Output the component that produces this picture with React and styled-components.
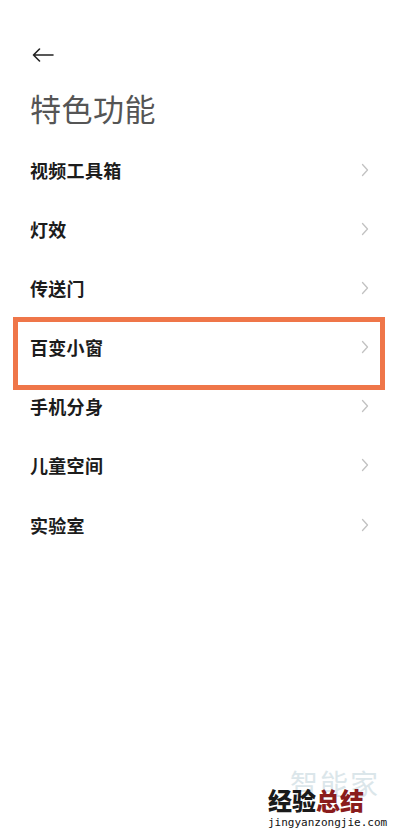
import React from "react";
import styled, { createGlobalStyle } from "styled-components";

const Global = createGlobalStyle`
  html, body { margin: 0; padding: 0; background: #fff; }
  body { font-family: "Noto Sans CJK SC", "Noto Sans", sans-serif; }
`;

const Page = styled.div`
  position: relative;
  width: 400px;
  height: 838px;
  overflow: hidden;
  background: #fff;
`;

const Header = styled.div`
  display: flex;
  flex-direction: column;
  padding: 44px 0 0 30px;
`;

const BackButton = styled.div`
  width: 28px;
  height: 22px;
  display: flex;
  align-items: center;
  color: #222;
  margin-left: 2px;
`;

const Title = styled.h1`
  margin: 22px 0 0 0;
  font-size: 31px;
  line-height: 40px;
  font-weight: 400;
  color: #555;
  letter-spacing: 0.5px;
`;

const List = styled.div`
  display: flex;
  flex-direction: column;
  margin-top: 12px;
`;

const Row = styled.div`
  position: relative;
  height: 59.17px;
  display: flex;
  align-items: center;
  justify-content: space-between;
  padding: 0 30px 0 30px;
`;

const Label = styled.span`
  font-size: 18px;
  font-weight: 700;
  color: #1c1c1c;
  letter-spacing: 0.3px;
`;

const Highlight = styled.div`
  position: absolute;
  left: 13px;
  top: 0px;
  width: 372px;
  height: 73px;
  box-sizing: border-box;
  border: 5px solid #ef7649;
  pointer-events: none;
`;

const Watermark = styled.div`
  position: absolute;
  right: 14px;
  bottom: 4px;
  width: 118px;
  height: 66px;
`;

const WmFaint = styled.div`
  position: absolute;
  left: 22px;
  top: 0;
  font-size: 28px;
  line-height: 30px;
  color: #dbe6ea;
  letter-spacing: 2px;
`;

const WmMain = styled.div`
  position: absolute;
  left: 0;
  top: 18px;
  font-size: 24px;
  font-weight: 900;
  color: #1a1a1a;
  line-height: 28px;
`;

const WmRed = styled.span`
  color: #8a1c1c;
`;

const WmUrl = styled.div`
  position: absolute;
  left: 0;
  top: 47px;
  font-family: "DejaVu Sans Mono", monospace;
  font-size: 11px;
  color: #111;
  line-height: 16px;
`;

const Chevron = () => (
  <svg width="10" height="16" viewBox="0 0 10 16" fill="none">
    <path d="M2.5 2.5 L7.5 8 L2.5 13.5" stroke="#c2c2c2" strokeWidth="1.3" strokeLinecap="round" strokeLinejoin="round" />
  </svg>
);

const ArrowLeft = () => (
  <svg width="22" height="14" viewBox="0 0 22 14" fill="none">
    <path d="M21 7 H1.5 M7.5 1 L1.5 7 L7.5 13" stroke="#222" strokeWidth="1.6" strokeLinecap="round" strokeLinejoin="round" />
  </svg>
);

const items = ["视频工具箱", "灯效", "传送门", "百变小窗", "手机分身", "儿童空间", "实验室"];

export default function App() {
  return (
    <Page>
      <Global />
      <Header>
        <BackButton>
          <ArrowLeft />
        </BackButton>
        <Title>特色功能</Title>
      </Header>
      <List>
        {items.map((t, i) => (
          <Row key={t}>
            <Label>{t}</Label>
            <Chevron />
            {i === 3 && <Highlight />}
          </Row>
        ))}
      </List>
      <Watermark>
        <WmFaint>智能家</WmFaint>
        <WmMain>
          经验<WmRed>总结</WmRed>
        </WmMain>
        <WmUrl>jingyanzongjie.com</WmUrl>
      </Watermark>
    </Page>
  );
}
